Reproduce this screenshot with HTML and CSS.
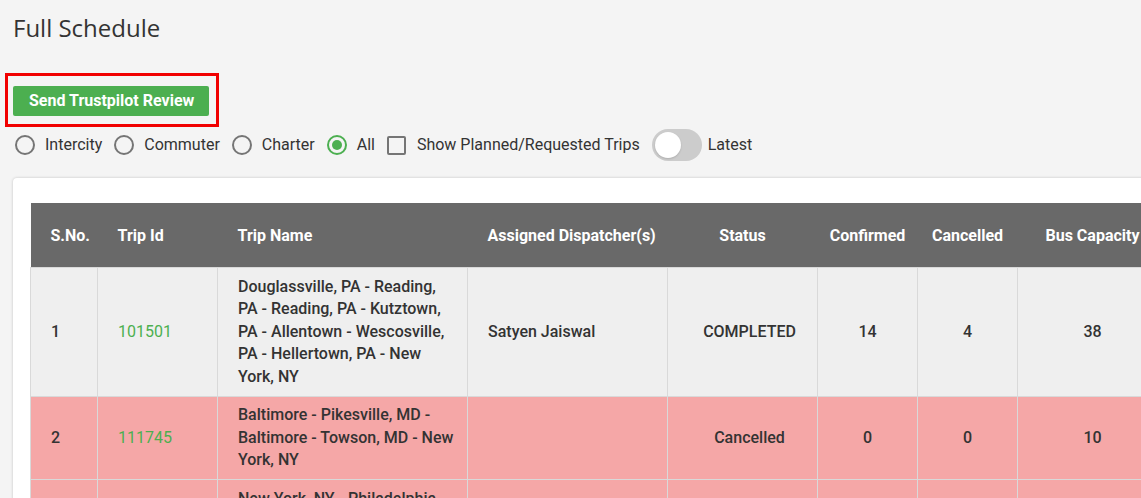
FILE: index.html
```html
<!DOCTYPE html>
<html>
<head>
<meta charset="utf-8">
<title>Full Schedule</title>
<link rel="stylesheet" href="styles.css">
</head>
<body>
<div class="page">
  <h1 class="title">Full Schedule</h1>
  <div class="highlight">
    <button class="btn-green">Send Trustpilot Review</button>
  </div>
  <div class="filters">
    <label class="opt"><span class="radio"></span><span class="opt-text">Intercity</span></label>
    <label class="opt"><span class="radio"></span><span class="opt-text">Commuter</span></label>
    <label class="opt"><span class="radio"></span><span class="opt-text">Charter</span></label>
    <label class="opt"><span class="radio checked"></span><span class="opt-text">All</span></label>
    <label class="opt"><span class="checkbox"></span><span class="opt-text">Show Planned/Requested Trips</span></label>
    <label class="opt"><span class="toggle"><span class="knob"></span></span><span class="opt-text">Latest</span></label>
  </div>
  <div class="card">
    <table class="grid">
      <colgroup>
        <col class="c-sno"><col class="c-id"><col class="c-name"><col class="c-disp"><col class="c-status"><col class="c-num"><col class="c-num"><col class="c-cap"><col class="c-extra"><col class="c-extra">
      </colgroup>
      <thead>
        <tr>
          <th class="left">S.No.</th>
          <th class="left">Trip Id</th>
          <th class="left">Trip Name</th>
          <th class="left">Assigned Dispatcher(s)</th>
          <th>Status</th>
          <th>Confirmed</th>
          <th>Cancelled</th>
          <th>Bus Capacity</th>
          <th>Departure</th>
          <th>Action</th>
        </tr>
      </thead>
      <tbody>
        <tr class="row-done">
          <td>1</td>
          <td class="trip-id">101501</td>
          <td>Douglassville, PA - Reading, PA - Reading, PA - Kutztown, PA - Allentown - Wescosville, PA - Hellertown, PA - New York, NY</td>
          <td>Satyen Jaiswal</td>
          <td class="status">COMPLETED</td>
          <td class="center">14</td>
          <td class="center">4</td>
          <td class="center">38</td>
          <td class="center"></td>
          <td class="center"></td>
        </tr>
        <tr class="row-cancel">
          <td>2</td>
          <td class="trip-id">111745</td>
          <td>Baltimore - Pikesville, MD - Baltimore - Towson, MD - New York, NY</td>
          <td></td>
          <td class="status">Cancelled</td>
          <td class="center">0</td>
          <td class="center">0</td>
          <td class="center">10</td>
          <td class="center"></td>
          <td class="center"></td>
        </tr>
        <tr class="row-cancel">
          <td>3</td>
          <td class="trip-id">111802</td>
          <td>New York, NY - Philadelphia, PA - Baltimore, MD</td>
          <td></td>
          <td class="status">Cancelled</td>
          <td class="center">0</td>
          <td class="center">0</td>
          <td class="center">10</td>
          <td class="center"></td>
          <td class="center"></td>
        </tr>
      </tbody>
    </table>
  </div>
</div>
</body>
</html>
```

FILE: styles.css
```css
html, body {
  margin: 0;
  padding: 0;
  overflow: hidden;
  background: #f4f4f4;
}
body {
  font-family: Roboto, "Liberation Sans", sans-serif;
  color: #333;
}
.page {
  padding: 13px 0 0 13px;
  width: 1500px;
}
.title {
  margin: 0;
  font-family: "Open Sans", sans-serif;
  font-weight: 400;
  font-size: 24px;
  line-height: 30px;
  color: #333;
}
.highlight {
  display: inline-block;
  margin: 30px 0 0 -8px;
  border: 3px solid #f10000;
  padding: 10px 7px 8px 5px;
}
.btn-green {
  display: block;
  height: 30px;
  padding: 0 15px 0 16px;
  border: none;
  border-radius: 2px;
  background: #4caf50;
  color: #fff;
  font-family: Roboto, sans-serif;
  font-weight: 700;
  font-size: 16px;
  line-height: 30px;
}
.filters {
  display: flex;
  align-items: center;
  gap: 12px;
  height: 32px;
  margin-top: 2px;
  padding-left: 2px;
}
.opt {
  display: flex;
  align-items: center;
  font-size: 16px;
  line-height: 20px;
  color: #333;
}
.radio {
  width: 20px;
  height: 20px;
  box-sizing: border-box;
  border: 2px solid #757575;
  border-radius: 50%;
  margin-right: 10px;
  position: relative;
}
.radio.checked {
  border-color: #4caf50;
}
.radio.checked::after {
  content: "";
  position: absolute;
  left: 3px;
  top: 3px;
  width: 10px;
  height: 10px;
  border-radius: 50%;
  background: #4caf50;
}
.checkbox {
  width: 19px;
  height: 19px;
  box-sizing: border-box;
  border: 2px solid #757575;
  border-radius: 2px;
  margin-right: 11px;
}
.toggle {
  width: 50px;
  height: 32px;
  border-radius: 16px;
  background: #cccccc;
  margin-right: 6px;
  display: flex;
  align-items: center;
  padding-left: 3px;
  box-sizing: border-box;
}
.knob {
  width: 26px;
  height: 26px;
  border-radius: 50%;
  background: #fff;
  box-shadow: 0 1px 2px rgba(0,0,0,0.15);
}
.card {
  margin-top: 17px;
  background: #fff;
  border-radius: 4px;
  box-shadow: 0 0 3px rgba(0,0,0,0.2);
  padding: 25px 17px 20px 17px;
}
.grid {
  border-collapse: collapse;
  table-layout: fixed;
  width: 1337px;
  font-size: 16px;
}
.c-sno { width: 67px; }
.c-id { width: 120px; }
.c-name { width: 250px; }
.c-disp { width: 200px; }
.c-status { width: 150px; }
.c-num { width: 100px; }
.c-cap { width: 150px; }
.c-extra { width: 100px; }
.grid th {
  background: #696969;
  color: #fff;
  font-weight: 700;
  font-size: 16px;
  height: 64px;
  padding: 0 8px;
  text-align: center;
  white-space: nowrap;
  border: none;
}
.grid th.left {
  text-align: left;
  padding-left: 20px;
}
.grid td {
  border: 1px solid #d9d9d9;
  padding: 7.5px 10px 7.5px 20px;
  line-height: 22.5px;
  vertical-align: middle;
  color: #333;
  font-weight: 500;
}
.grid td.center {
  text-align: center;
  padding-left: 10px;
}
.grid td.status {
  text-align: center;
  padding-left: 20px;
  padding-right: 6px;
}
.row-done td {
  background: #efefef;
}
.row-cancel td {
  background: #f5a7a7;
}
.grid td.trip-id {
  color: #4caf50;
  font-weight: 400;
}
```
